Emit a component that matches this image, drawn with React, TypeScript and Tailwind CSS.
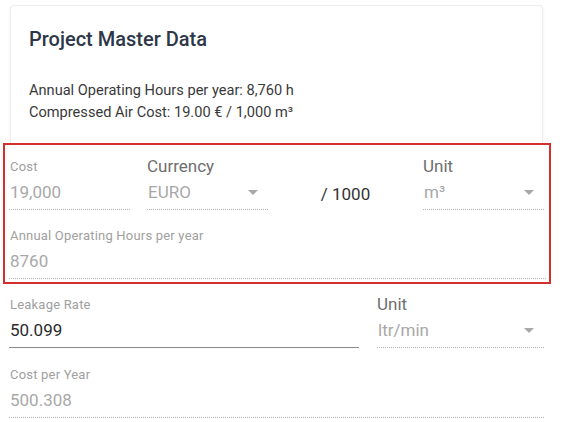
import React from "react";

function Arrow() {
  return (
    <svg width="10" height="5" viewBox="0 0 10 5" className="mr-[10px] shrink-0">
      <path d="M0 0 L10 0 L5 5 Z" fill="#a8a8a8" />
    </svg>
  );
}

type FieldProps = {
  label: string;
  value: string;
  bigLabel?: boolean;
  dark?: boolean;
  solid?: boolean;
  select?: boolean;
  className?: string;
};

function Field({ label, value, bigLabel, dark, solid, select, className = "" }: FieldProps) {
  return (
    <div className={className}>
      <div className="h-[24px]">
        {bigLabel ? (
          <div className="text-[17px] leading-[22px] text-[#6e6e6e]">{label}</div>
        ) : (
          <div className="pl-[1px] text-[13px] leading-[24px] tracking-[0.2px] text-[#a0a0a0]">{label}</div>
        )}
      </div>
      <div
        className={
          "h-[31px] border-b " +
          (solid ? "border-solid border-[#8a8a8a]" : "border-dotted border-[#b5b5b5]")
        }
      >
        <div className="flex h-[26px] items-center justify-between">
          <span
            className={
              "pl-[1px] text-[17px] leading-[26px] " + (dark ? "text-[#2b2b2b]" : "text-[#a8a8a8]")
            }
          >
            {value}
          </span>
          {select && <Arrow />}
        </div>
      </div>
    </div>
  );
}

export default function App() {
  return (
    <div className="h-[422px] w-[563px] overflow-hidden bg-white font-['Roboto',sans-serif]">
      <div className="ml-[10px] h-[143px] pt-[5px]">
        <div className="h-[138px] w-[533px] rounded-t-[4px] border border-b-0 border-[#ededed] pl-[18px] pt-[21px] shadow-[0_1px_3px_rgba(0,0,0,0.06)]">
          <h1 className="text-[20px] font-medium leading-[24px] text-[#2d3748]">Project Master Data</h1>
          <div className="mt-[28px] text-[14.6px] leading-[22px] text-[#3a3a3a]">
            <p>Annual Operating Hours per year: 8,760 h</p>
            <p>Compressed Air Cost: 19.00 € / 1,000 m³</p>
          </div>
        </div>
      </div>

      <div className="ml-[3px] h-[141px] w-[548px] border-2 border-[#d32f2f] pl-[4px] pr-[3px] pt-[10px]">
        <div className="flex">
          <Field label="Cost" value="19,000" className="w-[121px]" />
          <Field label="Currency" value="EURO" bigLabel select className="ml-[17px] w-[121px]" />
          <div className="flex w-[155px] justify-center pt-[26px]">
            <span className="text-[17px] leading-[26px] text-[#333333]">/ 1000</span>
          </div>
          <Field label="Unit" value="m³" bigLabel select className="w-[121px]" />
        </div>
        <Field label="Annual Operating Hours per year" value="8760" className="mt-[14px]" />
      </div>

      <div className="pl-[9px] pr-[19px] pt-[9px]">
        <div className="flex">
          <Field label="Leakage Rate" value="50.099" dark solid className="w-[350px]" />
          <Field label="Unit" value="ltr/min" bigLabel select className="ml-[18px] flex-1" />
        </div>
        <Field label="Cost per Year" value="500.308" className="mt-[15px]" />
      </div>
    </div>
  );
}
